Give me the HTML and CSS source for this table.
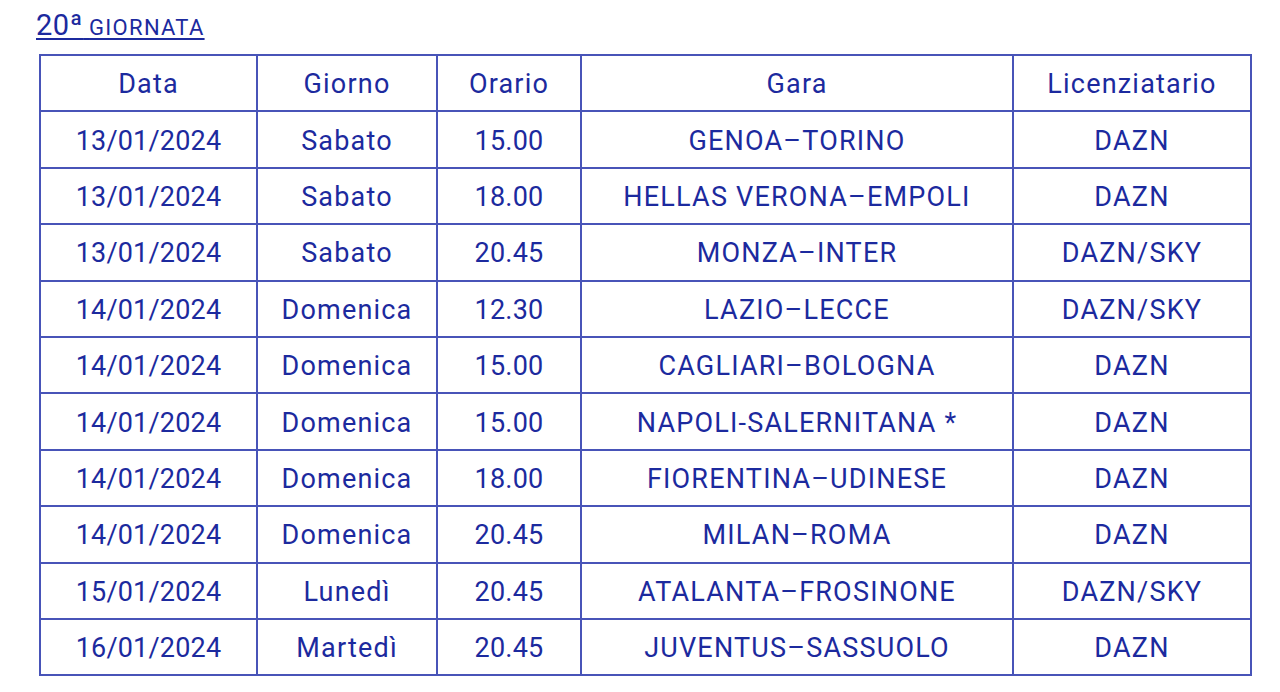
FILE: index.html
```html
<!DOCTYPE html>
<html lang="it">
<head>
<meta charset="utf-8">
<title>20ª Giornata</title>
<link rel="stylesheet" href="styles.css">
</head>
<body>
<h2 class="title"><a class="title-link"><span class="num">20ª</span> <span class="word">GIORNATA</span></a></h2>
<table class="sched">
<colgroup>
<col class="c1"><col class="c2"><col class="c3"><col class="c4"><col class="c5">
</colgroup>
<thead>
<tr><th>Data</th><th>Giorno</th><th>Orario</th><th>Gara</th><th>Licenziatario</th></tr>
</thead>
<tbody>
<tr><td>13/01/2024</td><td>Sabato</td><td>15.00</td><td>GENOA–TORINO</td><td>DAZN</td></tr>
<tr><td>13/01/2024</td><td>Sabato</td><td>18.00</td><td>HELLAS VERONA–EMPOLI</td><td>DAZN</td></tr>
<tr><td>13/01/2024</td><td>Sabato</td><td>20.45</td><td>MONZA–INTER</td><td>DAZN/SKY</td></tr>
<tr><td>14/01/2024</td><td>Domenica</td><td>12.30</td><td>LAZIO–LECCE</td><td>DAZN/SKY</td></tr>
<tr><td>14/01/2024</td><td>Domenica</td><td>15.00</td><td>CAGLIARI–BOLOGNA</td><td>DAZN</td></tr>
<tr><td>14/01/2024</td><td>Domenica</td><td>15.00</td><td>NAPOLI-SALERNITANA *</td><td>DAZN</td></tr>
<tr><td>14/01/2024</td><td>Domenica</td><td>18.00</td><td>FIORENTINA–UDINESE</td><td>DAZN</td></tr>
<tr><td>14/01/2024</td><td>Domenica</td><td>20.45</td><td>MILAN–ROMA</td><td>DAZN</td></tr>
<tr><td>15/01/2024</td><td>Lunedì</td><td>20.45</td><td>ATALANTA–FROSINONE</td><td>DAZN/SKY</td></tr>
<tr><td>16/01/2024</td><td>Martedì</td><td>20.45</td><td>JUVENTUS–SASSUOLO</td><td>DAZN</td></tr>
</tbody>
</table>
</body>
</html>
```
FILE: styles.css
```css
html, body {
  margin: 0;
  padding: 0;
  background: #ffffff;
}
body {
  font-family: Roboto, "Liberation Sans", sans-serif;
  color: #1c2a9e;
  padding: 7px 0 0 39px;
}
.title {
  margin: 0 0 0 -3px;
  font-weight: 400;
  line-height: 36px;
  height: 47px;
}
.title-link {
  color: #1c2a9e;
  text-decoration: underline;
  text-decoration-thickness: 1.5px;
  text-underline-offset: 3px;
}
.num {
  font-size: 29px;
  letter-spacing: 0.5px;
}
.word {
  font-size: 22px;
  letter-spacing: 1.3px;
}
.sched {
  border-collapse: collapse;
  width: 1211px;
  table-layout: fixed;
  font-size: 27px;
  letter-spacing: 1.2px;
}
.c1 { width: 217px; }
.c2 { width: 180px; }
.c3 { width: 144px; }
.c4 { width: 432px; }
.c5 { width: 238px; }
.sched th, .sched td {
  border: 2px solid #4854b8;
  text-align: center;
  font-weight: 400;
  padding: 2px 0 0;
  height: 52px;
}
.sched td:nth-child(1), .sched td:nth-child(3) {
  letter-spacing: 0.2px;
}
.sched tr {
  height: 56.4px;
}
```
